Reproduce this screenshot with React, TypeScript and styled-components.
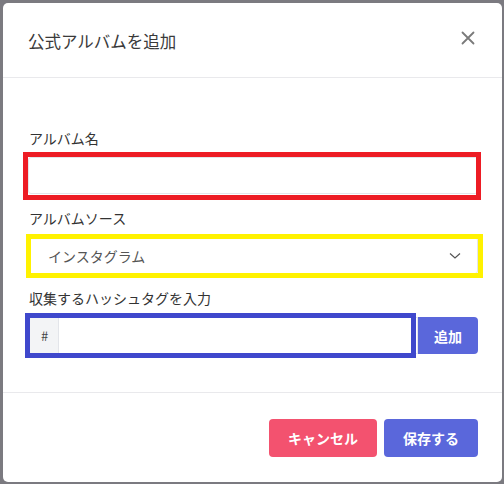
import React from 'react';
import styled, { createGlobalStyle } from 'styled-components';

const GlobalStyle = createGlobalStyle`
  html, body {
    margin: 0;
    padding: 0;
    background: #7b7a80;
  }
  body {
    font-family: "Noto Sans CJK JP", "Noto Sans", sans-serif;
    color: #333;
  }
`;

const Backdrop = styled.div`
  width: 504px;
  height: 484px;
  padding: 3px 2px 2px 3px;
  box-sizing: border-box;
`;

const Modal = styled.div`
  width: 499px;
  height: 479px;
  background: #fff;
  border-radius: 5px;
  display: flex;
  flex-direction: column;
  overflow: hidden;
`;

const Header = styled.div`
  height: 75px;
  display: flex;
  align-items: center;
  justify-content: space-between;
  padding: 0 24px 0 25px;
  border-bottom: 1px solid #e9e9ec;
  box-sizing: border-box;
`;

const Title = styled.h2`
  margin: 0;
  font-size: 16.5px;
  font-weight: 400;
  color: #3a3a3a;
  line-height: 1;
  padding-top: 2px;
`;

const CloseButton = styled.button`
  border: 0;
  background: none;
  padding: 0;
  width: 24px;
  height: 24px;
  display: flex;
  align-items: center;
  justify-content: center;
  margin-right: -2px;
  margin-top: -4px;
  cursor: pointer;
`;

const Body = styled.div`
  flex: 1;
  padding: 50px 24px 0 25px;
  display: flex;
  flex-direction: column;
  gap: 14px;
`;

const Group = styled.div`
  display: flex;
  flex-direction: column;
`;

const Label = styled.label`
  font-size: 14px;
  line-height: 21px;
  color: #333;
  margin-bottom: 8px;
  padding-left: 1px;
`;

const Field = styled.div`
  position: relative;
  display: flex;
  height: 37px;
`;

const Mark = styled.div<{ $color: string; $l: number; $r: number; $t: number; $b: number }>`
  position: absolute;
  left: ${(p) => p.$l}px;
  right: ${(p) => p.$r}px;
  top: ${(p) => p.$t}px;
  bottom: ${(p) => p.$b}px;
  border: 5px solid ${(p) => p.$color};
  pointer-events: none;
`;

const TextInput = styled.input`
  flex: 1;
  min-width: 0;
  height: 100%;
  box-sizing: border-box;
  border: 1px solid #e3e5ea;
  border-radius: 3px;
  background: #fff;
  font: inherit;
  font-size: 14px;
  padding: 0 12px;
  outline: none;
`;

const Select = styled.div`
  flex: 1;
  display: flex;
  align-items: center;
  justify-content: space-between;
  box-sizing: border-box;
  border: 1px solid #e3e5ea;
  border-radius: 3px;
  padding: 0 16px 0 19px;
  font-size: 14px;
  color: #555;
`;

const Addon = styled.span`
  width: 30px;
  flex: none;
  display: flex;
  align-items: center;
  justify-content: center;
  background: #f3f4f6;
  border: 1px solid #e3e5ea;
  border-right: 0;
  border-radius: 3px 0 0 3px;
  box-sizing: border-box;
  font-size: 13px;
  color: #444;
  padding-left: 2px;
`;

const GroupInput = styled(TextInput)`
  border-radius: 0;
`;

const Button = styled.button<{ $tone: 'primary' | 'danger' }>`
  border: 0;
  height: 38px;
  padding: 0 19px;
  border-radius: 4px;
  font: inherit;
  font-size: 14px;
  font-weight: 700;
  color: #fff;
  background: ${(p) => (p.$tone === 'danger' ? '#f3526f' : '#5a67db')};
  cursor: pointer;
`;

const AddButton = styled(Button)`
  height: 100%;
  padding: 0 16px;
  border-radius: 0 4px 4px 0;
`;

const Footer = styled.div`
  height: 90px;
  box-sizing: border-box;
  border-top: 1px solid #e9e9ec;
  display: flex;
  justify-content: flex-end;
  align-items: flex-start;
  padding: 26px 24px 0 0;
  gap: 7px;
`;

export default function App() {
  return (
    <>
      <GlobalStyle />
      <Backdrop>
        <Modal>
          <Header>
            <Title>公式アルバムを追加</Title>
            <CloseButton aria-label="close">
              <svg width="14" height="14" viewBox="0 0 14 14">
                <path d="M1.5 1.5 L12.5 12.5 M12.5 1.5 L1.5 12.5" stroke="#7a7a7a" strokeWidth="1.8" strokeLinecap="round" />
              </svg>
            </CloseButton>
          </Header>
          <Body>
            <Group>
              <Label>アルバム名</Label>
              <Field>
                <TextInput />
                <Mark $color="#ed1c24" $l={-5} $r={-3} $t={-5} $b={-6} />
              </Field>
            </Group>
            <Group>
              <Label>アルバムソース</Label>
              <Field>
                <Select>
                  <span>インスタグラム</span>
                  <svg width="12" height="8" viewBox="0 0 12 8">
                    <path d="M1 1.5 L6 6 L11 1.5" fill="none" stroke="#555" strokeWidth="1.2" />
                  </svg>
                </Select>
                <Mark $color="#fff200" $l={-2} $r={-5} $t={-3} $b={-4} />
              </Field>
            </Group>
            <Group>
              <Label>収集するハッシュタグを入力</Label>
              <Field>
                <Addon>#</Addon>
                <GroupInput />
                <AddButton $tone="primary">追加</AddButton>
                <Mark $color="#3f48cc" $l={-3} $r={62} $t={-4} $b={-4} />
              </Field>
            </Group>
          </Body>
          <Footer>
            <Button $tone="danger">キャンセル</Button>
            <Button $tone="primary">保存する</Button>
          </Footer>
        </Modal>
      </Backdrop>
    </>
  );
}
